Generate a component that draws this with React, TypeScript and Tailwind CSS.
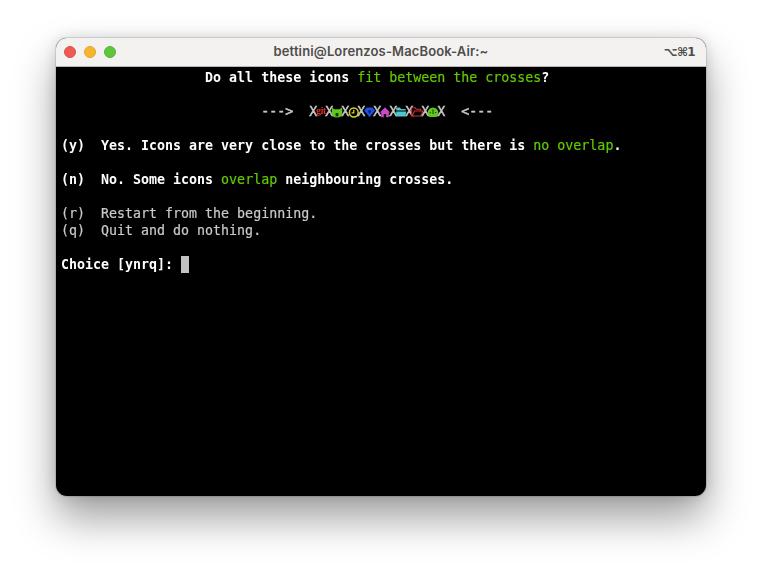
const Ico = ({ children }: { children: React.ReactNode }) => (
  <svg viewBox="0 0 12 17" className="w-[12px] h-[17px] mx-[-2px] shrink-0 overflow-visible relative z-10">
    {children}
  </svg>
);

const X = () => <span>X</span>;

const G = ({ children }: { children: React.ReactNode }) => (
  <span className="font-normal text-[#62c900] [-webkit-text-stroke:0.2px_#62c900]">{children}</span>
);

const Row = ({ children, className = "" }: { children?: React.ReactNode; className?: string }) => (
  <div className={`h-[17px] leading-[17px] whitespace-pre ${className}`}>{children}</div>
);

export default function App() {
  return (
    <div className="w-[762px] h-[570px] bg-white pt-[38px] pl-[56px] overflow-hidden">
      <div className="w-[650px] h-[458px] rounded-[11px] overflow-hidden bg-black flex flex-col shadow-[0_22px_42px_rgba(0,0,0,0.38),0_0_14px_rgba(0,0,0,0.14),0_0_0_1px_rgba(0,0,0,0.1)]">
        <div className="h-[29px] shrink-0 bg-[#f3f2f0] border-b border-[#b9b8b6] grid grid-cols-[1fr_auto_1fr] items-center px-[8px]">
          <div className="flex gap-[8px]">
            <span className="w-[12px] h-[12px] rounded-full bg-[#ee5a52] border border-[#dd4f48]" />
            <span className="w-[12px] h-[12px] rounded-full bg-[#f6b52f] border border-[#e3a52a]" />
            <span className="w-[12px] h-[12px] rounded-full bg-[#5fc53d] border border-[#54b336]" />
          </div>
          <div className="text-center font-['Inter',sans-serif] text-[13px] font-semibold text-[#4e4d4c] tracking-[0.13px]">
            bettini@Lorenzos-MacBook-Air:~
          </div>
          <div className="text-right font-['DejaVu_Sans',sans-serif] text-[12px] font-bold text-[#4e4d4c] pr-[3px] tracking-[-0.7px]">
            ⌥⌘1
          </div>
        </div>
        <div className="flex-1 pt-[2px] pl-[5px] font-['DejaVu_Sans_Mono',monospace] text-[13.3px] text-[#c9c9c9] [-webkit-text-stroke:0.2px_#c9c9c9] [will-change:transform]">
          <Row className="font-bold text-white [-webkit-text-stroke:0px]">{"                  Do all these icons "}<G>fit between the crosses</G>?</Row>
          <Row />
          <Row className="flex [-webkit-text-stroke:0.45px_#c9c9c9]">
            <span>{"                         --->  "}</span>
            <X />
            <Ico><text x="6" y="11" textAnchor="middle" fontSize="9.5" fontWeight="700" letterSpacing="-0.4" fontFamily="'Liberation Serif', serif" fill="#e0302a" className="[-webkit-text-stroke:0.2px_#e0302a]">git</text></Ico>
            <X />
            <Ico><path d="M.8 4 3.2 6.200h5.600L11.200 4v6.400c0 2.400-1.800 4-5.200 4S.8 12.800.8 10.400Z" fill="#62c61f" /><rect x="4.600" y="10" width="2.800" height="3.400" fill="#123d05" /></Ico>
            <X />
            <Ico><circle cx="6.800" cy="9.500" r="4.400" fill="none" stroke="#d4d52a" strokeWidth="1.500" /><path d="M6.800 6.800v3H4.600" fill="none" stroke="#d4d52a" strokeWidth="1.200" /></Ico>
            <X />
            <Ico><path d="M3.600 4.600h6l2.400 3-5.400 6.600L1.200 7.600Z" fill="#1f4fe0" /><path d="M4.800 7.400h3.600L6.600 11Z" fill="#0a1a50" /></Ico>
            <X />
            <Ico><path d="M6 4.200 11 9.400H9.800V14.200H7.200V11H4.800V14.200H2.200V9.400H1Z" fill="#cf45cb" /></Ico>
            <X />
            <Ico><path d="M1.200 4.600H5l1 1.400h4.600v1.600H1.200ZM1.200 8.400h10.200l-1.200 5H1.200Z" fill="#4fc6cc" /></Ico>
            <X />
            <Ico><path d="M.6 4.800h3.600l1 1.400h4.400v1.800H3.400L1.200 13H9.800L12 8H3.400M.6 4.800V13" fill="none" stroke="#cc322c" strokeWidth="1.100" /></Ico>
            <X />
            <Ico><path d="M6 4.400a5.300 5.300 0 0 1 5.300 5.300c0 1.800-.7 3.200-1.800 4.200h-7C1.400 12.900.7 11.500.7 9.700A5.300 5.300 0 0 1 6 4.400Z" fill="#62c61f" /><path d="M6 6.400v4.600" stroke="#123d05" strokeWidth="1" /><circle cx="3.300" cy="9.600" r=".7" fill="#123d05" /><circle cx="8.700" cy="9.600" r=".7" fill="#123d05" /></Ico>
            <X />
            <span>{"  <---"}</span>
          </Row>
          <Row />
          <Row className="font-bold text-white [-webkit-text-stroke:0px]">{"(y)  Yes. Icons are very close to the crosses but there is "}<G>no overlap</G>.</Row>
          <Row />
          <Row className="font-bold text-white [-webkit-text-stroke:0px]">{"(n)  No. Some icons "}<G>overlap</G>{" neighbouring crosses."}</Row>
          <Row />
          <Row>{"(r)  Restart from the beginning."}</Row>
          <Row>{"(q)  Quit and do nothing."}</Row>
          <Row />
          <Row className="flex items-center">
            <span className="font-bold text-white [-webkit-text-stroke:0px]">{"Choice [ynrq]: "}</span>
            <span className="w-[8px] h-[17px] bg-[#c4c4c4]" />
          </Row>
        </div>
      </div>
    </div>
  );
}
